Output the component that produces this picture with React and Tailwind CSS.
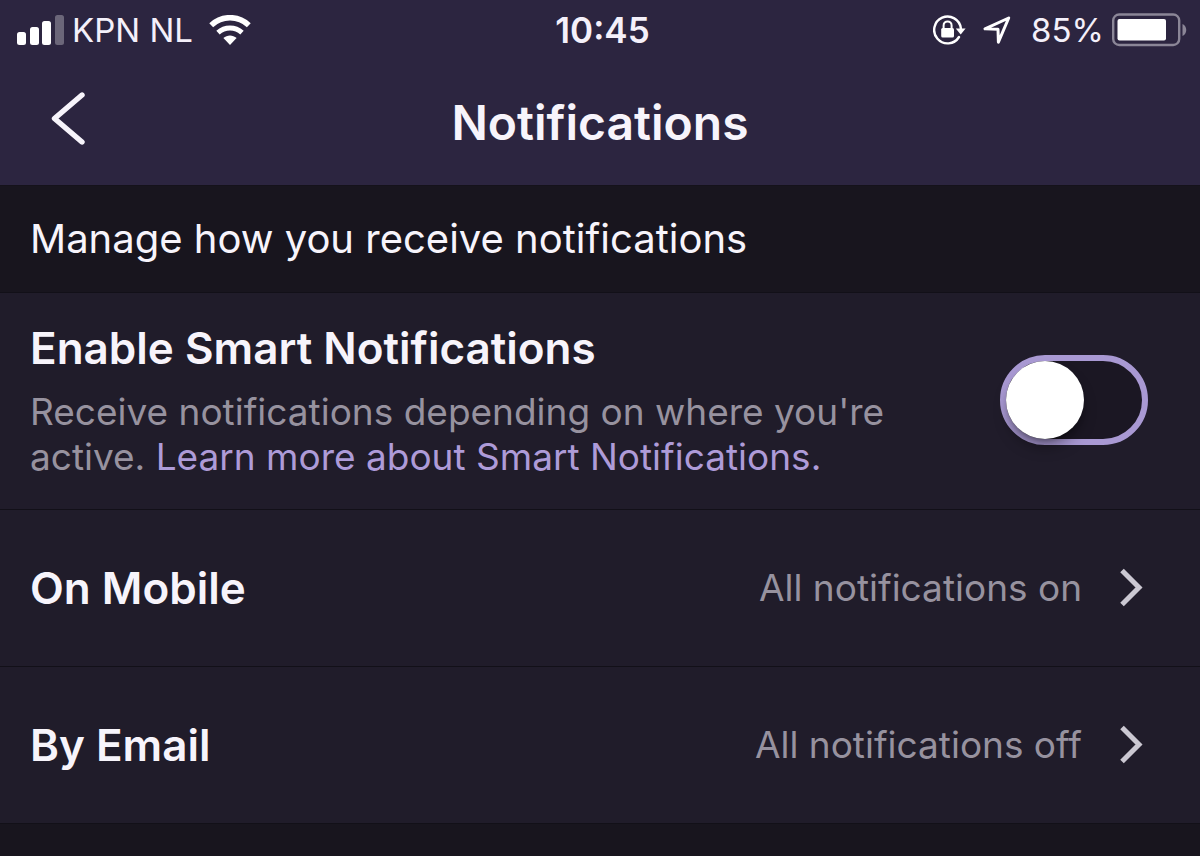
import { useState } from 'react'

const channels = [
  { id: 'mobile', label: 'On Mobile', status: 'All notifications on' },
  { id: 'email', label: 'By Email', status: 'All notifications off' },
]

function SignalIcon() {
  return (
    <svg className="shrink-0" width="47" height="30" viewBox="0 0 47 30" fill="#fff" aria-hidden="true">
      <rect x="0" y="17" width="9" height="13" rx="2.5" />
      <rect x="13" y="12" width="9" height="18" rx="2.5" />
      <rect x="25" y="6" width="9" height="24" rx="2.5" />
      <rect x="38" y="0" width="9" height="30" rx="2.5" opacity="0.3" />
    </svg>
  )
}

function WifiIcon() {
  return (
    <svg className="shrink-0" width="42" height="30" viewBox="0 0 42 30" fill="none" stroke="#fff" aria-hidden="true">
      <path d="M2.2 10.2C12.8 .2 29.2 .2 39.8 10.2" strokeWidth="5.6" />
      <path d="M9 17.6c6.8-6.2 17.2-6.2 24 0" strokeWidth="5" />
      <path d="M21 30l-6.6-6.9c3.8-3.4 9.4-3.4 13.2 0z" fill="#fff" stroke="none" />
    </svg>
  )
}

function RotationLockIcon() {
  return (
    <svg className="shrink-0" width="34" height="30" viewBox="0 0 34 30" fill="none" aria-hidden="true">
      <path d="M27.9 13.5A13.4 13.4 0 1 0 26 22" stroke="#fff" strokeWidth="2.4" strokeLinecap="round" />
      <path d="M22.8 13.5h9.8l-4.9 6z" fill="#fff" />
      <rect x="8.2" y="13" width="12.8" height="9.5" rx="1.5" fill="#fff" />
      <path d="M10.6 14v-3.6a4 4 0 0 1 8 0V14" stroke="#fff" strokeWidth="2" />
    </svg>
  )
}

function LocationIcon() {
  return (
    <svg className="shrink-0" width="28" height="28" viewBox="0 0 28 28" fill="none" aria-hidden="true">
      <path d="M25.7 2L2 12.8l13 .4.4 13z" stroke="#fff" strokeWidth="3" strokeLinejoin="round" />
    </svg>
  )
}

function BatteryIcon() {
  return (
    <svg className="shrink-0" width="76" height="34" viewBox="0 0 76 34" fill="none" aria-hidden="true">
      <rect x="1.2" y="1.5" width="66" height="30.5" rx="6" stroke="#8b8697" strokeWidth="2.4" />
      <rect x="5.5" y="6" width="48.5" height="21.5" rx="2" fill="#fff" />
      <path d="M70.5 11c5 2 5 10 0 12z" fill="#8b8697" />
    </svg>
  )
}

function StatusBar() {
  return (
    <div className="grid h-15 grid-cols-[1fr_auto_1fr] items-center pl-[17px] pr-3 text-[34px] leading-10 text-[#f4f0fa]">
      <div className="flex items-center">
        <SignalIcon />
        <span className="ml-2 text-[33px]">KPN NL</span>
        <span className="ml-4"><WifiIcon /></span>
      </div>
      <span className="text-[35px] font-semibold">10:45</span>
      <div className="flex items-center justify-end">
        <RotationLockIcon />
        <span className="ml-4"><LocationIcon /></span>
        <span className="ml-5 text-[33px]">85%</span>
        <span className="ml-2"><BatteryIcon /></span>
      </div>
    </div>
  )
}

function ChannelRow({ channel }) {
  return (
    <button
      type="button"
      className="flex w-full items-center border-b border-[#121018] px-[30px] py-12 pr-14 text-left leading-15"
    >
      <span className="text-[44px] font-semibold text-[#f7f4fb]">{channel.label}</span>
      <span className="ml-auto text-[37px] text-[#97929f]">{channel.status}</span>
      <svg className="ml-9 shrink-0" width="26" height="40" viewBox="0 0 26 40" fill="none" aria-hidden="true">
        <path d="M4 2.5l17 17L4 36.5" stroke="#cbc8d2" strokeWidth="5" />
      </svg>
    </button>
  )
}

export default function App() {
  const [smart, setSmart] = useState(false)

  return (
    <div className="min-h-screen bg-[#18151e] font-[Inter,'Liberation_Sans',sans-serif]">
      {/* Header */}
      <header className="border-b border-[#15121b] bg-[#2c2540]">
        <StatusBar />
        <div className="grid h-[125px] grid-cols-[1fr_auto_1fr] items-center px-12">
          <button type="button" aria-label="Back" className="justify-self-start pb-2">
            <svg width="40" height="56" viewBox="0 0 40 56" fill="none" aria-hidden="true">
              <path d="M34 4L6.5 27.5 34 51" stroke="#f7f4fb" strokeWidth="5.4" strokeLinecap="round" strokeLinejoin="round" />
            </svg>
          </button>
          <h1 className="text-[48px] font-semibold leading-15 text-[#f7f4fb]">Notifications</h1>
        </div>
      </header>

      <main>
        <h2 className="px-[30px] py-7 text-[40px] leading-[50px] text-[#f7f4fb]">
          Manage how you receive notifications
        </h2>

        {/* Smart notifications */}
        <div className="flex items-center justify-between border-y border-[#121018] bg-[#201c2a] pt-7 pb-[30px] pl-[30px] pr-[52px]">
          <div className="max-w-[880px]">
            <label htmlFor="smart" className="block text-[44px] font-semibold leading-[54px] text-[#f7f4fb]">
              Enable Smart Notifications
            </label>
            <p className="mt-[14px] text-[37px] leading-[45px] text-[#97929f]">
              Receive notifications depending on where you're active.{' '}
              <a href="#smart-notifications" className="text-[#ae9bd8]">Learn more about Smart Notifications.</a>
            </p>
          </div>
          <input
            id="smart"
            type="checkbox"
            role="switch"
            checked={smart}
            onChange={(e) => setSmart(e.target.checked)}
            className="h-[90px] w-[148px] shrink-0 cursor-pointer appearance-none rounded-full border-6 border-[#a999d3] bg-[#1b1723] before:block before:size-[78px] before:rounded-full before:bg-white before:shadow-lg before:shadow-black/40 checked:bg-[#a999d3] checked:before:translate-x-[58px]"
          />
        </div>

        <div className="bg-[#201c2a]">
          {channels.map((channel) => (
            <ChannelRow key={channel.id} channel={channel} />
          ))}
        </div>
      </main>
    </div>
  )
}
